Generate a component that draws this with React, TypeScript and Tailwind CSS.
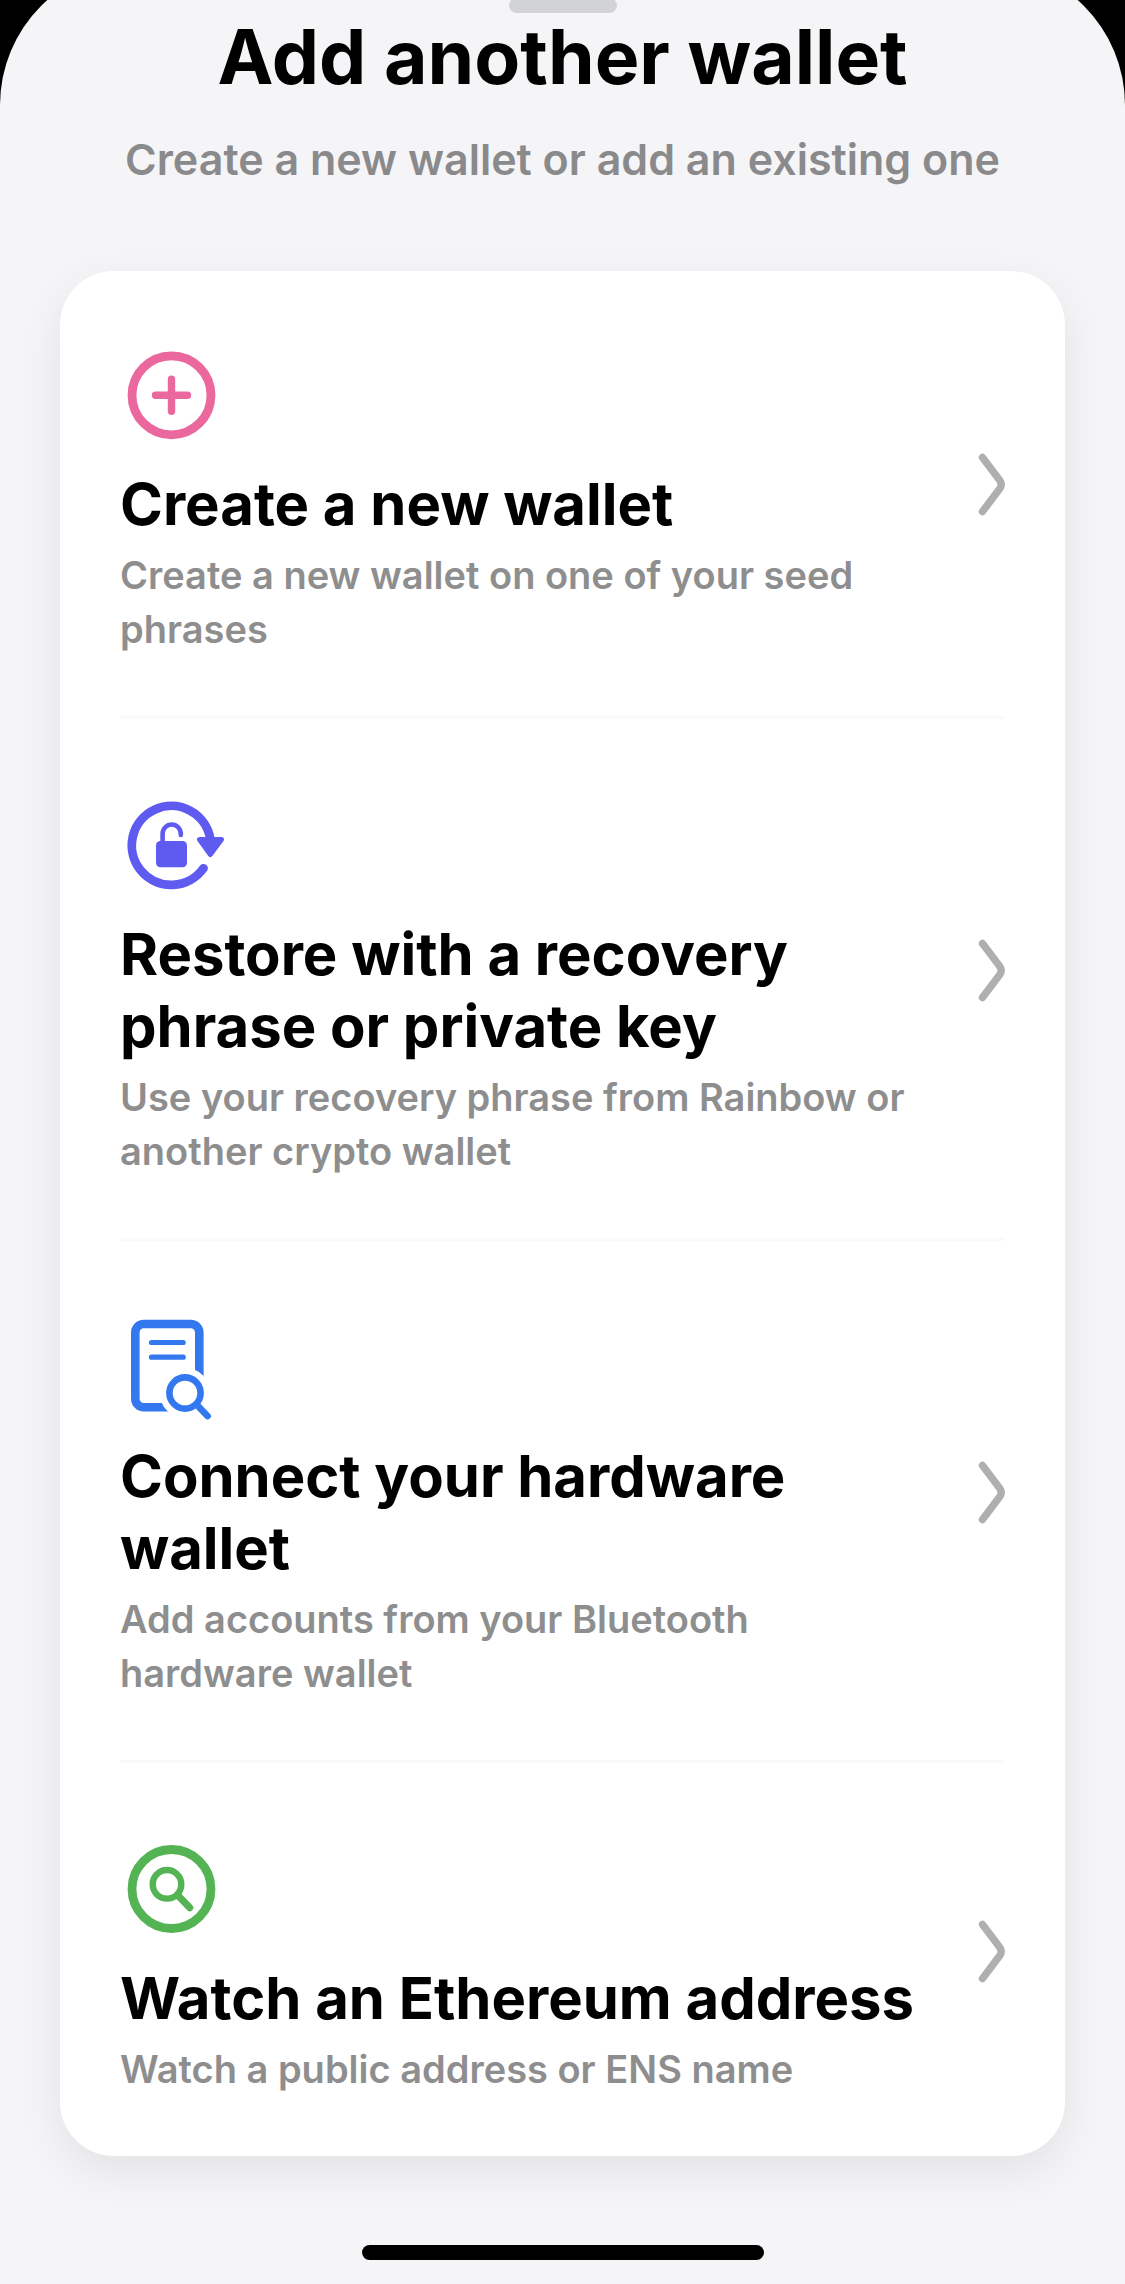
import { Fragment } from "react";
import type { ReactNode } from "react";

type WalletOption = {
  title: string;
  description: string;
  icon: ReactNode;
};

function OptionIcon({ className, children }: { className: string; children: ReactNode }) {
  return (
    <svg
      viewBox="0 0 112 128"
      fill="none"
      stroke="currentColor"
      strokeLinecap="round"
      strokeLinejoin="round"
      aria-hidden="true"
      className={`w-28 h-32 ${className}`}
    >
      {children}
    </svg>
  );
}

const options: WalletOption[] = [
  {
    title: "Create a new wallet",
    description: "Create a new wallet on one of your seed phrases",
    icon: (
      <OptionIcon className="text-[#ea689e]">
        <circle cx="51.5" cy="64.3" r="39.5" strokeWidth="8.8" />
        <path d="M35.5 64.3h32M51.5 48.3v32" strokeWidth="7.4" />
      </OptionIcon>
    ),
  },
  {
    title: "Restore with a recovery phrase or private key",
    description: "Use your recovery phrase from Rainbow or another crypto wallet",
    icon: (
      <OptionIcon className="text-[#5f5af0]">
        <path d="M83.5 87.3A39.5 39.5 0 1 1 90.3 58" strokeWidth="8.8" />
        <path d="M79.5 58.5h22L90.3 73.5z" fill="currentColor" strokeWidth="5" />
        <rect x="36" y="60" width="31" height="26.2" rx="4.5" fill="currentColor" stroke="none" />
        <path d="M42.6 62V53a9.1 9.5 0 0 1 18.2 0v1" strokeWidth="4.6" />
      </OptionIcon>
    ),
  },
  {
    title: "Connect your hardware wallet",
    description: "Add accounts from your Bluetooth hardware wallet",
    icon: (
      <OptionIcon className="text-[#3478f0]">
        <rect x="15.3" y="21" width="64" height="83.3" rx="8.5" strokeWidth="8.6" />
        <path d="M31.5 39.5h31.7M31.5 54.2h31.7" strokeWidth="5.2" />
        <circle cx="65" cy="90" r="25.2" fill="white" stroke="none" />
        <path d="M72 96l22 22" stroke="white" strokeWidth="12" />
        <circle cx="65" cy="90" r="15.6" strokeWidth="6.6" />
        <path d="M76.5 101.5l11 11.5" strokeWidth="6.8" />
      </OptionIcon>
    ),
  },
  {
    title: "Watch an Ethereum address",
    description: "Watch a public address or ENS name",
    icon: (
      <OptionIcon className="text-[#54b353]">
        <circle cx="51.5" cy="64" r="39.5" strokeWidth="8.8" />
        <circle cx="47" cy="59.3" r="14.3" strokeWidth="6.4" />
        <path d="M57.5 70l12.3 12.8" strokeWidth="7" />
      </OptionIcon>
    ),
  },
];

function Chevron() {
  return (
    <svg
      viewBox="0 0 28 64"
      fill="none"
      stroke="currentColor"
      strokeWidth="7.4"
      strokeLinecap="round"
      aria-hidden="true"
      className="w-7 h-16 mb-5 shrink-0 text-[#afafaf]"
    >
      <path d="M5.5 5.5l17 22.5q3.4 4.5 0 9L5.5 59.5" />
    </svg>
  );
}

function OptionRow({ title, description, icon }: WalletOption) {
  return (
    <button type="button" className="flex w-full items-center justify-between py-15 text-left">
      <span className="flex max-w-[800px] flex-col">
        {icon}
        <span className="mt-[9px] text-[58px] leading-[72px] font-bold text-black">{title}</span>
        <span className="mt-2 text-[38px] leading-[54px] font-semibold text-[#8e8e8f]">{description}</span>
      </span>
      <Chevron />
    </button>
  );
}

export default function App() {
  return (
    <div className="min-h-screen overflow-hidden bg-black font-['Inter',sans-serif]">
      <main className="-mt-[35px] flex flex-col items-center rounded-t-[140px] bg-[#f5f5f7] px-15 pt-[33px] pb-6">
        <div className="h-[15px] w-[108px] rounded-full bg-[#d2d3d7]" />
        <h1 className="mt-1 text-center text-[75px] leading-[80px] font-bold text-black">Add another wallet</h1>
        <p className="mt-[35px] text-center text-[43px] leading-[54px] font-semibold text-[#8a8a8c]">
          Create a new wallet or add an existing one
        </p>
        <section className="mt-[85px] w-full rounded-[54px] bg-white px-15 shadow-[0_15px_45px_rgba(0,0,0,0.08)]">
          {options.map((option, index) => (
            <Fragment key={option.title}>
              {index > 0 && <div className="mb-[2px] h-[3px] rounded-full bg-[#fafafa]" />}
              <OptionRow {...option} />
            </Fragment>
          ))}
        </section>
        <div className="mt-[89px] h-[15px] w-[402px] rounded-full bg-black" />
      </main>
    </div>
  );
}
